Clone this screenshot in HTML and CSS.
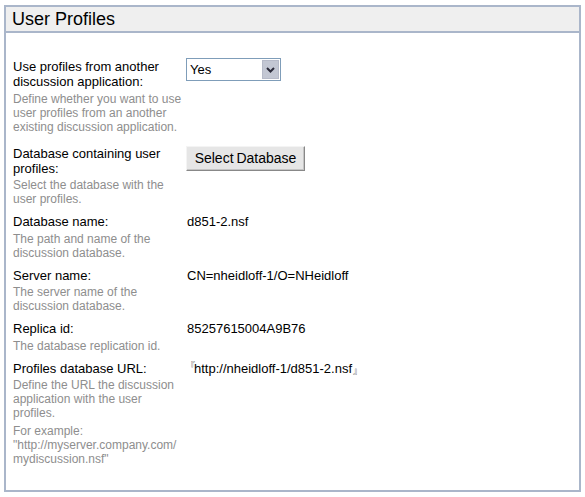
FILE: index.html
```html
<!DOCTYPE html>
<html>
<head>
<meta charset="utf-8">
<link rel="stylesheet" href="styles.css">
</head>
<body>
<div class="panel">
  <div class="panel-head"><h1 class="title">User Profiles</h1></div>
  <div class="panel-body">
    <div class="row row-first">
      <div class="cell-label">
        <div class="label">Use profiles from another discussion application:</div>
        <div class="desc">Define whether you want to use user profiles from an another existing discussion application.</div>
      </div>
      <div class="cell-value">
        <div class="select">
          <span class="select-text">Yes</span>
          <span class="select-arrow"><svg width="9" height="6" viewBox="0 0 9 6"><path d="M1 1 L4.5 4.5 L8 1" fill="none" stroke="#2b2b3a" stroke-width="2"/></svg></span>
        </div>
      </div>
    </div>
    <div class="row">
      <div class="cell-label">
        <div class="label">Database containing user profiles:</div>
        <div class="desc">Select the database with the user profiles.</div>
      </div>
      <div class="cell-value">
        <div class="button">Select Database</div>
      </div>
    </div>
    <div class="row">
      <div class="cell-label">
        <div class="label">Database name:</div>
        <div class="desc">The path and name of the discussion database.</div>
      </div>
      <div class="cell-value"><div class="value">d851-2.nsf</div></div>
    </div>
    <div class="row">
      <div class="cell-label">
        <div class="label">Server name:</div>
        <div class="desc">The server name of the discussion database.</div>
      </div>
      <div class="cell-value"><div class="value">CN=nheidloff-1/O=NHeidloff</div></div>
    </div>
    <div class="row">
      <div class="cell-label">
        <div class="label">Replica id:</div>
        <div class="desc">The database replication id.</div>
      </div>
      <div class="cell-value"><div class="value">85257615004A9B76</div></div>
    </div>
    <div class="row">
      <div class="cell-label">
        <div class="label">Profiles database URL:</div>
        <div class="desc">Define the URL the discussion application with the user profiles.</div>
        <div class="desc desc-example">For example: "http://myserver.company.com/ mydiscussion.nsf"</div>
      </div>
      <div class="cell-value"><div class="value"><span class="mark mark-open">『</span>http://nheidloff-1/d851-2.nsf<span class="mark mark-close">』</span></div></div>
    </div>
  </div>
</div>
</body>
</html>
```
FILE: styles.css
```css
html, body {
  margin: 0;
  padding: 0;
  background: #ffffff;
}
body {
  font-family: "Liberation Sans", Arial, sans-serif;
  color: #000;
}
.panel {
  margin: 5px 0 0 4px;
  width: 577px;
  height: 487px;
  box-sizing: border-box;
  border: 2px solid #aab6ca;
  display: flex;
  flex-direction: column;
}
.panel-head {
  background: #efefef;
  border-bottom: 2px solid #aab6ca;
  height: 26px;
  box-sizing: border-box;
  padding-left: 6px;
}
.title {
  margin: 0;
  font-weight: normal;
  font-size: 18px;
  line-height: 24px;
}
.panel-body {
  padding: 26px 0 0 7px;
}
.row {
  display: grid;
  grid-template-columns: 173px 1fr;
  margin-bottom: 8px;
}
.row-first {
  margin-bottom: 12px;
}
.label {
  font-size: 13px;
  line-height: 15px;
  width: 170px;
}
.desc {
  font-size: 12px;
  line-height: 14px;
  color: #8e8e8e;
  margin-top: 2.5px;
  width: 172px;
}
.desc-example {
  margin-top: 4px;
}
.value {
  font-size: 13px;
  line-height: 15px;
  padding-left: 1px;
}
.select {
  margin-top: -1px;
  width: 95px;
  height: 23px;
  box-sizing: border-box;
  border: 1px solid #7f9db9;
  display: flex;
  align-items: stretch;
  background: #fff;
}
.select-text {
  flex: 1;
  font-size: 13px;
  line-height: 21px;
  padding-left: 3px;
}
.select-arrow {
  width: 15px;
  margin: 1px;
  background: #c3c7d3;
  border: 1px solid #b6bac8;
  display: flex;
  align-items: center;
  justify-content: center;
}
.button {
  display: inline-block;
  width: 119px;
  height: 25px;
  box-sizing: border-box;
  background: #e6e6e6;
  border: 1px solid #f4f4f4;
  border-right-color: #888;
  border-bottom-color: #888;
  box-shadow: inset -1px -1px 0 #c4c4c4;
  font-size: 14px;
  line-height: 23px;
  text-align: center;
  word-spacing: -1px;
}
.mark {
  font-family: "Noto Sans CJK JP", sans-serif;
  font-size: 9px;
  color: #444;
  display: inline-block;
  line-height: 10px;
}
.mark-open {
  vertical-align: top;
  margin-left: -1px;
  margin-right: -1px;
}
.mark-close {
  vertical-align: bottom;
  margin-left: 1px;
}
```
